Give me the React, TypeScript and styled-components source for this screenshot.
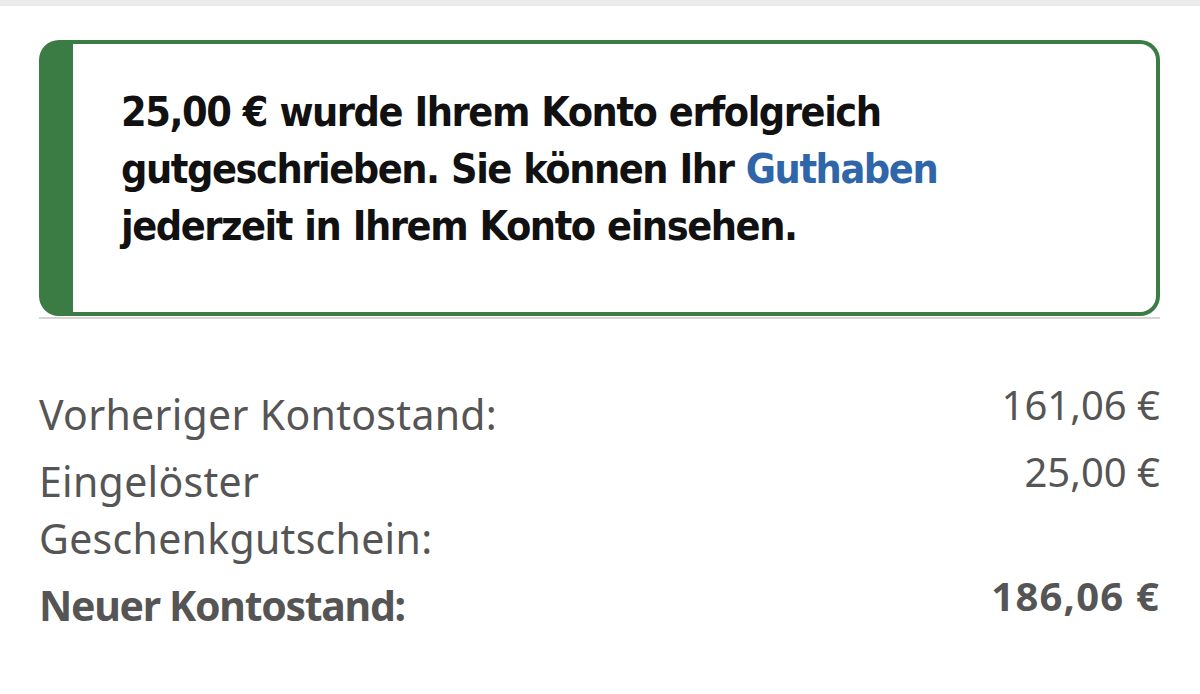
import React from 'react'
import styled, { createGlobalStyle } from 'styled-components'

const GlobalStyle = createGlobalStyle`
  html, body {
    margin: 0;
    padding: 0;
    background: #fff;
  }
  body {
    font-family: 'Noto Sans', 'DejaVu Sans', sans-serif;
    -webkit-font-smoothing: antialiased;
  }
`

const Page = styled.div`
  width: 1200px;
  min-height: 694px;
  display: flex;
  flex-direction: column;
`

const TopBar = styled.div`
  height: 6px;
  background: #ebebeb;
`

const Content = styled.div`
  padding: 34px 40px 0 39px;
  display: flex;
  flex-direction: column;
`

const Alert = styled.div`
  display: flex;
  border: 4px solid #3b7c45;
  border-left: 34px solid #3b7c45;
  border-radius: 20px;
  height: 276px;
  box-sizing: border-box;
`

const AlertText = styled.p`
  margin: 0;
  padding: 40px 40px 0 48px;
  font-family: 'DejaVu Sans Condensed', 'DejaVu Sans', sans-serif;
  font-weight: 700;
  font-size: 41px;
  letter-spacing: -1.45px;
  word-spacing: 1px;
  line-height: 57px;
  color: #111;
`

const Link = styled.a`
  color: #2f65a9;
  text-decoration: none;
`

const Divider = styled.div`
  height: 2px;
  background: #d6d6d6;
  margin-top: 1px;
`

const Summary = styled.div`
  margin-top: 67px;
  display: flex;
  flex-direction: column;
  gap: 10px;
`

const Row = styled.div`
  display: flex;
  justify-content: space-between;
  align-items: flex-start;
  color: #555;
`

const Label = styled.span<{ $bold?: boolean }>`
  font-size: 41px;
  line-height: 57px;
  letter-spacing: ${(p) => (p.$bold ? '-1.3px' : '0.3px')};
  font-weight: ${(p) => (p.$bold ? 700 : 400)};
  max-width: 480px;
`

const Value = styled.span<{ $bold?: boolean }>`
  font-size: 40px;
  line-height: 37px;
  letter-spacing: ${(p) => (p.$bold ? '1.2px' : '0')};
  font-weight: ${(p) => (p.$bold ? 700 : 400)};
  white-space: nowrap;
`

const rows = [
  { label: 'Vorheriger Kontostand:', value: '161,06 €' },
  { label: 'Eingelöster Geschenkgutschein:', value: '25,00 €' },
  { label: 'Neuer Kontostand:', value: '186,06 €', bold: true },
]

export default function App() {
  return (
    <Page>
      <GlobalStyle />
      <TopBar />
      <Content>
        <Alert>
          <AlertText>
            25,00 € wurde Ihrem Konto erfolgreich gutgeschrieben. Sie können Ihr{' '}
            <Link href="#">Guthaben</Link> jederzeit in Ihrem Konto einsehen.
          </AlertText>
        </Alert>
        <Divider />
        <Summary>
          {rows.map((r) => (
            <Row key={r.label}>
              <Label $bold={r.bold}>{r.label}</Label>
              <Value $bold={r.bold}>{r.value}</Value>
            </Row>
          ))}
        </Summary>
      </Content>
    </Page>
  )
}
